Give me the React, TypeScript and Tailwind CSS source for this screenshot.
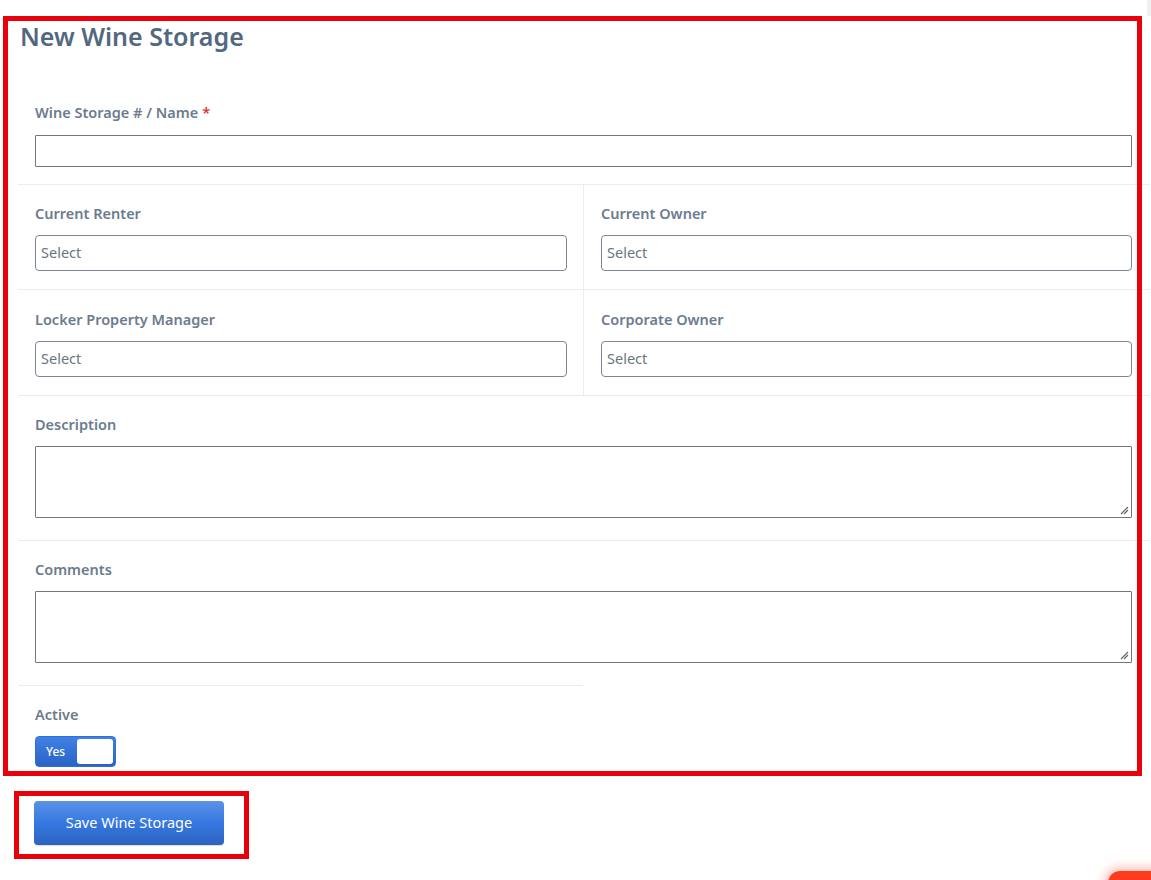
import React from 'react';

const font = { fontFamily: '"Noto Sans", "Open Sans", Arial, sans-serif' };

function Label({ children, required }: { children: React.ReactNode; required?: boolean }) {
    return (
        <label className="block h-5 text-[14.5px] leading-5 font-semibold text-[#6c7b8e]">
            {children}
            {required && <span className="text-[#e3342f] ml-1">*</span>}
        </label>
    );
}

function SelectBox() {
    return (
        <div className="h-9 rounded-[4px] border border-[#7d8794] bg-white flex items-center px-[5px] text-[14.5px] text-[#6c757d]">
            Select
        </div>
    );
}

function ResizeGrip() {
    return (
        <svg width="10" height="10" viewBox="0 0 10 10" className="absolute right-[2px] bottom-[2px]">
            <path d="M9 2 L2 9 M9 5 L5 9" stroke="#666" strokeWidth="1.2" />
        </svg>
    );
}

function TextArea() {
    return (
        <div className="relative h-[72px] border border-[#767676] rounded-[1px] bg-white">
            <ResizeGrip />
        </div>
    );
}

function Field({ label, children, required }: { label: string; children: React.ReactNode; required?: boolean }) {
    return (
        <div className="flex flex-col gap-3">
            <Label required={required}>{label}</Label>
            {children}
        </div>
    );
}

export default function App() {
    return (
        <div className="relative w-[1151px] h-[880px] bg-white overflow-hidden" style={font}>
            <h1 className="pl-5 pt-5 text-[25px] leading-8 font-semibold text-[#52687f]">New Wine Storage</h1>

            <div className="ml-[18px] w-[1132px] mt-8">
                {/* name */}
                <div className="pt-[18px] pb-[17px] pl-[17px] pr-[18px] border-b border-[#ececec]">
                    <div className="flex flex-col gap-[13px]">
                        <Label required>Wine Storage # / Name</Label>
                        <div className="h-8 border border-[#767676] rounded-[1px] bg-white" />
                    </div>
                </div>

                {/* two-column selects */}
                <div className="grid grid-cols-[566px_1fr] border-b border-[#ececec]">
                    <div className="pt-[18px] pb-[18px] pl-[17px] pr-4 border-r border-[#ececec]">
                        <Field label="Current Renter"><SelectBox /></Field>
                    </div>
                    <div className="pt-[18px] pb-[18px] pl-[17px] pr-[18px]">
                        <Field label="Current Owner"><SelectBox /></Field>
                    </div>
                </div>
                <div className="grid grid-cols-[566px_1fr] border-b border-[#ececec]">
                    <div className="pt-[19px] pb-[18px] pl-[17px] pr-4 border-r border-[#ececec]">
                        <Field label="Locker Property Manager"><SelectBox /></Field>
                    </div>
                    <div className="pt-[19px] pb-[18px] pl-[17px] pr-[18px]">
                        <Field label="Corporate Owner"><SelectBox /></Field>
                    </div>
                </div>

                <div className="pt-[18px] pb-[22px] pl-[17px] pr-[18px] border-b border-[#ececec]">
                    <Field label="Description"><TextArea /></Field>
                </div>
                <div className="pt-[18px] pb-[22px] pl-[17px] pr-[18px]">
                    <Field label="Comments"><TextArea /></Field>
                </div>

                {/* active toggle */}
                <div className="w-[565px] border-t border-[#ececec] pt-[18px] pl-[17px]">
                    <Field label="Active">
                        <div className="w-[81px] h-[31px] rounded-[4px] border border-[#2e6fdb] bg-gradient-to-b from-[#3f82e4] to-[#2a63c6] flex items-center justify-between pl-[10px] pr-[2px]">
                            <span className="text-[12px] font-medium text-white">Yes</span>
                            <span className="w-[36px] h-[25px] rounded-[3px] bg-white" />
                        </div>
                    </Field>
                </div>
            </div>

            <div className="pl-[34px] mt-[34px]">
                <button className="w-[190px] h-[44px] rounded-[4px] bg-gradient-to-b from-[#5b92e6] via-[#3478e0] to-[#2c63c0] text-white text-[14.5px] shadow-[0_1px_1px_rgba(0,0,0,0.15)]">
                    Save Wine Storage
                </button>
            </div>

            {/* highlight frames */}
            <div className="absolute left-[3px] top-4 w-[1139px] h-[760px] border-[5px] border-[#e8000b] pointer-events-none" />
            <div className="absolute left-[14px] top-[791px] w-[235px] h-[68px] border-[5px] border-[#e8000b] pointer-events-none" />

            {/* scrollbar sliver */}
            <div className="absolute right-0 top-0 w-[4px] h-4 bg-[#f1f1f1]" />

            {/* floating help button edge */}
            <div className="absolute left-[1108px] top-[871px] w-[60px] h-[40px] rounded-[12px] bg-[#ff3b1f] shadow-[0_0_10px_4px_rgba(255,80,50,0.35)]" />
        </div>
    );
}
